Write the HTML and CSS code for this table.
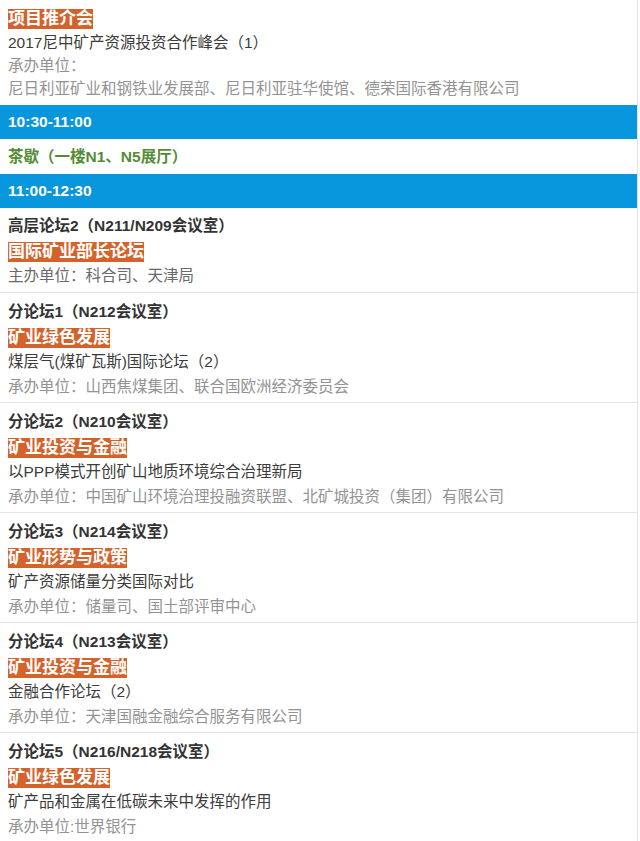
FILE: index.html
```html
<!DOCTYPE html>
<html lang="zh-CN">

<head>
    <meta charset="UTF-8">
    <meta name="viewport" content="width=device-width, initial-scale=1.0">
    <title>会议日程</title>
    <link rel="stylesheet" href="styles.css">
</head>

<body>
    <div class="schedule">
        <div class="session first">
            <div class="line tag-line"><span class="tag">项目推介会</span></div>
            <div class="line">2017尼中矿产资源投资合作峰会（1）</div>
            <div class="line muted">承办单位：</div>
            <div class="line muted">尼日利亚矿业和钢铁业发展部、尼日利亚驻华使馆、德荣国际香港有限公司</div>
        </div>

        <div class="slot">10:30-11:00</div>
        <div class="break">茶歇（一楼N1、N5展厅）</div>
        <div class="slot">11:00-12:30</div>

        <div class="session plenary">
            <div class="line title">高层论坛2（N211/N209会议室）</div>
            <div class="line tag-line"><span class="tag">国际矿业部长论坛</span></div>
            <div class="line host">主办单位：科合司、天津局</div>
        </div>

        <div class="session">
            <div class="line title">分论坛1（N212会议室）</div>
            <div class="line tag-line"><span class="tag">矿业绿色发展</span></div>
            <div class="line">煤层气(煤矿瓦斯)国际论坛（2）</div>
            <div class="line muted">承办单位：山西焦煤集团、联合国欧洲经济委员会</div>
        </div>

        <div class="session">
            <div class="line title">分论坛2（N210会议室）</div>
            <div class="line tag-line"><span class="tag">矿业投资与金融</span></div>
            <div class="line">以PPP模式开创矿山地质环境综合治理新局</div>
            <div class="line muted">承办单位：中国矿山环境治理投融资联盟、北矿城投资（集团）有限公司</div>
        </div>

        <div class="session">
            <div class="line title">分论坛3（N214会议室）</div>
            <div class="line tag-line"><span class="tag">矿业形势与政策</span></div>
            <div class="line">矿产资源储量分类国际对比</div>
            <div class="line muted">承办单位：储量司、国土部评审中心</div>
        </div>

        <div class="session">
            <div class="line title">分论坛4（N213会议室）</div>
            <div class="line tag-line"><span class="tag">矿业投资与金融</span></div>
            <div class="line">金融合作论坛（2）</div>
            <div class="line muted">承办单位：天津国融金融综合服务有限公司</div>
        </div>

        <div class="session">
            <div class="line title">分论坛5（N216/N218会议室）</div>
            <div class="line tag-line"><span class="tag">矿业绿色发展</span></div>
            <div class="line">矿产品和金属在低碳未来中发挥的作用</div>
            <div class="line muted">承办单位:世界银行</div>
        </div>
    </div>
</body>

</html>
```

FILE: styles.css
```css
body {
    margin: 0;
    padding: 0;
    background-color: #fff;
    font-family: "Liberation Sans", "Noto Sans CJK SC", sans-serif;
    font-size: 15.5px;
    color: #3c3c3c;
}

.schedule {
    width: 637px;
    border-right: 1px solid #e2e2e2;
}

.session {
    padding: 6px 8px 3px;
    border-bottom: 1px solid #e3e3e3;
}

.session.first {
    padding: 4px 8px 5px;
    border-bottom: none;
}

.session.plenary {
    padding: 5px 8px 4px;
}

.line {
    height: 25px;
    line-height: 25px;
    white-space: nowrap;
    overflow: hidden;
}

.session.first .line {
    height: 23px;
    line-height: 23px;
}

.session.first .tag-line {
    height: 27px;
    line-height: 27px;
}

.title {
    font-weight: bold;
    color: #333;
}

.tag {
    display: inline-block;
    line-height: 20px;
    vertical-align: middle;
    background-color: #d4622b;
    color: #fff;
    font-size: 17px;
    font-weight: bold;
}

.muted {
    color: #939393;
}

.host {
    color: #6a6a6a;
}

.slot {
    background-color: #0896dc;
    color: #fff;
    font-weight: bold;
    padding: 4px 8px;
    height: 26px;
    line-height: 26px;
}

.break {
    padding: 5px 8px;
    height: 25px;
    line-height: 25px;
    color: #538c35;
    font-weight: bold;
}
```
